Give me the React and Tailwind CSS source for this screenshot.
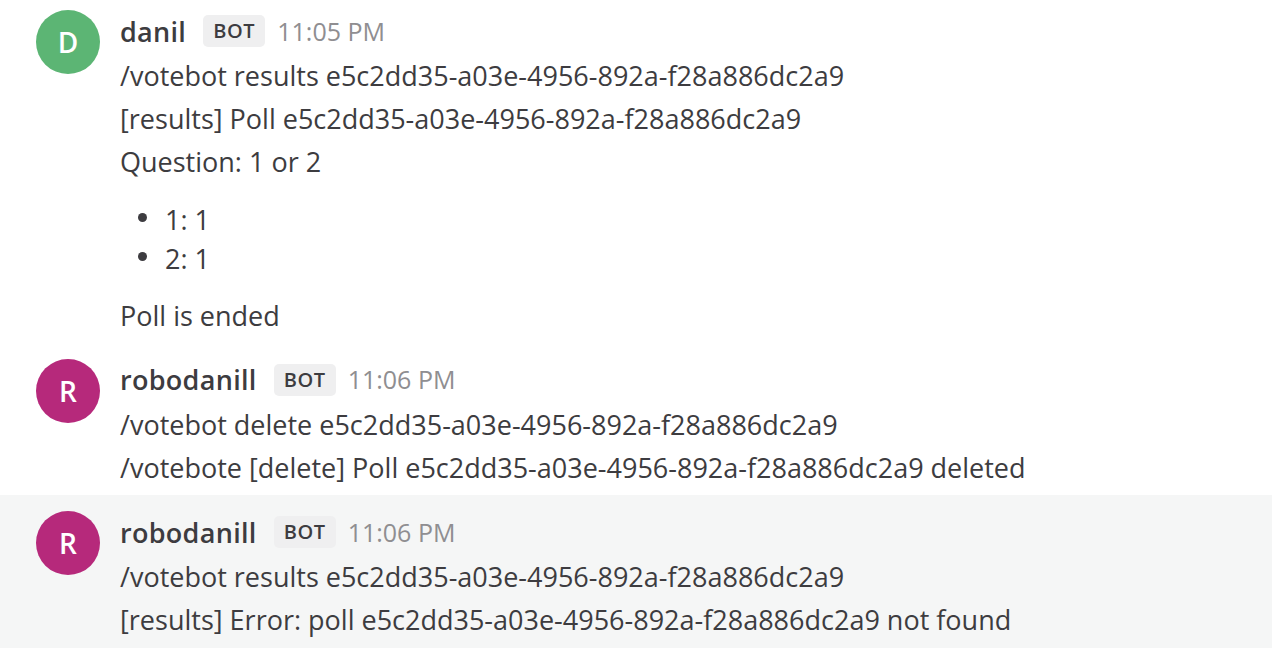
import React from 'react';

const posts = [
  {
    id: 1,
    name: 'danil',
    initial: 'D',
    color: 'bg-[#5cb574]',
    time: '11:05 PM',
    highlight: false,
    lines: [
      '/votebot results e5c2dd35-a03e-4956-892a-f28a886dc2a9',
      '[results] Poll e5c2dd35-a03e-4956-892a-f28a886dc2a9',
      'Question: 1 or 2',
    ],
    list: ['1: 1', '2: 1'],
    after: ['Poll is ended'],
  },
  {
    id: 2,
    name: 'robodanill',
    initial: 'R',
    color: 'bg-[#b6297b]',
    time: '11:06 PM',
    highlight: false,
    lines: [
      '/votebot delete e5c2dd35-a03e-4956-892a-f28a886dc2a9',
      '/votebote [delete] Poll e5c2dd35-a03e-4956-892a-f28a886dc2a9 deleted',
    ],
  },
  {
    id: 3,
    name: 'robodanill',
    initial: 'R',
    color: 'bg-[#b6297b]',
    time: '11:06 PM',
    highlight: true,
    lines: [
      '/votebot results e5c2dd35-a03e-4956-892a-f28a886dc2a9',
      '[results] Error: poll e5c2dd35-a03e-4956-892a-f28a886dc2a9 not found',
    ],
  },
];

const Post = ({ post }) => (
  <div className={`flex pl-[36px] pt-[16px] pb-[6px] ${post.highlight ? 'bg-[#f5f6f6]' : 'bg-white'}`}>
    <div
      className={`w-[64px] h-[64px] shrink-0 rounded-full ${post.color} flex items-center justify-center text-white text-[28px] font-semibold`}
    >
      {post.initial}
    </div>
    <div className="ml-[20px] flex-1">
      {/* header */}
      <div className="h-[42px] mb-[2px] flex items-center">
        <span className="text-[27px] font-semibold text-[#3d3c40] leading-none tracking-[0.3px]">{post.name}</span>
        <span className="ml-[17px] h-[32px] px-[10px] rounded-[5px] bg-[#efeff0] text-[#3d3c40] text-[20px] font-semibold flex items-center tracking-[0.6px]">
          BOT
        </span>
        <span className="ml-[12px] text-[25px] text-[#8f8e91] leading-none">{post.time}</span>
      </div>
      {/* body */}
      <div className="text-[27px] leading-[43.2px] text-[#3d3c40]">
        {post.lines.map((l, i) => (
          <p key={i}>{l}</p>
        ))}
        {post.list && (
          <ul className="my-[16px]">
            {post.list.map((item) => (
              <li key={item} className="flex items-center h-[39px]">
                <span className="w-[9px] h-[9px] rounded-full bg-[#3d3c40] ml-[18px] mr-[18px] -mt-[4px]" />
                {item}
              </li>
            ))}
          </ul>
        )}
        {post.after && post.after.map((l, i) => <p key={i}>{l}</p>)}
      </div>
    </div>
  </div>
);

const App = () => (
  <div className="w-[1272px] h-[648px] overflow-hidden bg-white font-['Open_Sans',sans-serif]">
    <div className="-mt-[6px]">
      {posts.map((p) => (
        <Post key={p.id} post={p} />
      ))}
    </div>
  </div>
);

export default App;
